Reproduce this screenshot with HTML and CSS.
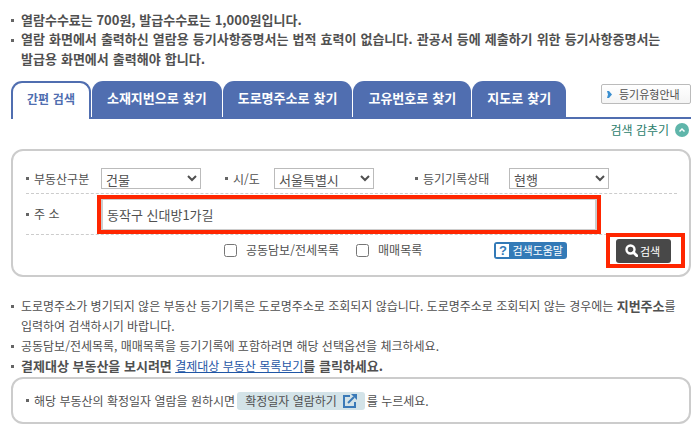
FILE: index.html
```html
<!DOCTYPE html>
<html lang="ko">
<head>
  <meta charset="UTF-8">
  <meta name="viewport" content="width=device-width, initial-scale=1.0">
  <title>간편 검색</title>
  <link rel="stylesheet" href="styles.css">
</head>
<body>

  <ul class="notice strong">
    <li class="price">열람수수료는 700원, 발급수수료는 1,000원입니다.</li>
    <li>열람 화면에서 출력하신 열람용 등기사항증명서는 법적 효력이 없습니다. 관공서 등에 제출하기 위한 등기사항증명서는 발급용 화면에서 출력해야 합니다.</li>
  </ul>

  <nav class="tabs">
    <a href="#" class="tab active">간편 검색</a>
    <a href="#" class="tab">소재지번으로 찾기</a>
    <a href="#" class="tab">도로명주소로 찾기</a>
    <a href="#" class="tab">고유번호로 찾기</a>
    <a href="#" class="tab">지도로 찾기</a>
    <button type="button" class="type-btn">
      <svg width="5" height="7" viewBox="0 0 5 7"><path d="M0 0h2l3 3.500-3 3.500H0l1-3.500z" fill="#3b8fd0"/></svg>
      등기유형안내
    </button>
  </nav>

  <a href="#" class="fold">
    검색 감추기
    <svg width="14" height="14" viewBox="0 0 14 14"><circle cx="7" cy="7" r="7" fill="#5fb5aa"/><path d="M4.500 8.500L7 6l2.500 2.500" fill="none" stroke="#fff" stroke-width="1.500"/></svg>
  </a>

  <form class="panel search">
    <div class="row filters">
      <label class="dot" for="kind">부동산구분</label>
      <select id="kind"><option>건물</option></select>
      <label class="dot" for="city">시/도</label>
      <select id="city"><option>서울특별시</option></select>
      <label class="dot" for="state">등기기록상태</label>
      <select id="state"><option>현행</option></select>
    </div>
    <div class="row address">
      <label class="dot" for="addr">주 소</label>
      <input type="text" id="addr" value="동작구 신대방1가길">
    </div>
    <div class="options">
      <label class="check"><input type="checkbox">공동담보/전세목록</label>
      <label class="check"><input type="checkbox">매매목록</label>
      <button type="button" class="help-btn"><span class="mark">?</span>검색도움말</button>
      <div class="focus-frame">
        <button type="submit" class="search-btn">
          <svg width="13" height="13" viewBox="0 0 13 13" fill="none" stroke="#fff"><circle cx="5.500" cy="5.500" r="4" stroke-width="2.400"/><path d="M8.500 8.500l3.300 3.300" stroke-width="2.800" stroke-linecap="round"/></svg>
          검색
        </button>
      </div>
    </div>
  </form>

  <ul class="notice">
    <li>도로명주소가 병기되지 않은 부동산 등기기록은 도로명주소로 조회되지 않습니다. 도로명주소로 조회되지 않는 경우에는 <strong>지번주소</strong>를 입력하여 검색하시기 바랍니다.</li>
    <li>공동담보/전세목록, 매매목록을 등기기록에 포함하려면 해당 선택옵션을 체크하세요.</li>
    <li><strong>결제대상 부동산을 보시려면</strong> <a href="#" class="link">결제대상 부동산 목록보기</a><strong>를 클릭하세요.</strong></li>
  </ul>

  <div class="panel guide">
    <span class="dot">해당 부동산의 확정일자 열람을 원하시면</span>
    <button type="button" class="date-btn">
      확정일자 열람하기
      <svg width="14" height="14" viewBox="0 0 14 14" fill="none" stroke="#3a7ab8" stroke-width="2"><path d="M7 2H1v11h11V8"/><path d="M5 9l6-6"/><path d="M8 0h6v6z" fill="#3a7ab8" stroke="none"/></svg>
    </button>
    <span>를 누르세요.</span>
  </div>

</body>
</html>
```

FILE: styles.css
```css
* {
  box-sizing: border-box;
}

body {
  margin: 0;
  padding: 10px 8px 6px 11px;
  font-family: "Noto Sans CJK KR", sans-serif;
  font-size: 12px;
  line-height: 20px;
  color: #505050;
  background: #fff;
}

a {
  text-decoration: none;
}

button,
input,
select {
  font-family: inherit;
  color: inherit;
}

button {
  cursor: pointer;
}

svg {
  flex: none;
}

.strong,
.tab {
  font-family: "DejaVu Sans Condensed", "Noto Sans CJK KR", sans-serif;
  font-size: 13px;
  font-weight: bold;
}

strong {
  font-size: 13px;
  vertical-align: top;
}

/* Notices */
.notice {
  margin: 0;
  padding: 0;
  list-style: none;
  word-break: keep-all;
}

.notice li {
  padding-left: 10px;
  background: linear-gradient(#666, #666) 0 9px / 3px 3px no-repeat;
}

.price {
  font-family: "Liberation Sans Narrow", "Noto Sans CJK KR", sans-serif;
}

.link {
  color: #1f56a5;
  text-decoration: underline;
}

/* Tabs */
.tabs {
  display: flex;
  gap: 1px;
  height: 38px;
  margin-top: 11px;
  border-bottom: 2px solid #506eb0;
}

.tab {
  padding: 0 15px;
  line-height: 36px;
  color: #fff;
  background: #506eb0;
  border-radius: 11px 11px 0 0;
  white-space: nowrap;
}

.tab.active {
  margin-bottom: -2px;
  padding: 0 14px;
  font-size: 12px;
  line-height: 34px;
  color: #506eb0;
  background: #fff;
  border: 2px solid #506eb0;
  border-bottom: none;
}

.type-btn {
  display: flex;
  align-items: center;
  gap: 7px;
  width: 90px;
  height: 20px;
  margin: 3px 0 0 auto;
  padding: 0 5px;
  font-size: 11px;
  white-space: nowrap;
  background: linear-gradient(#fff, #f4f4f4);
  border: 1px solid #bbb;
  border-radius: 2px;
}

.fold {
  display: flex;
  justify-content: flex-end;
  align-items: center;
  gap: 6px;
  height: 20px;
  margin-top: 1px;
  padding-right: 2px;
  color: #2b7d6c;
}

/* Boxes */
.panel {
  border: 2px solid #ccc;
  border-radius: 12px;
}

.dot {
  padding-left: 8px;
  background: linear-gradient(#666, #666) 0 50% / 3px 3px no-repeat;
}

.search {
  margin: 9px 0 19px;
  padding: 17px 12px 10px 13px;
}

.row {
  display: grid;
  align-items: center;
  border-bottom: 1px dashed #ccc;
}

.filters {
  grid-template-columns: 75px 124px 49px 141px 94px 1fr;
  padding-bottom: 4px;
}

.filters select {
  width: 100px;
  height: 21px;
  padding: 0;
  font-size: 13px;
  background: #fff;
  border: 1px solid #bbb;
  border-radius: 0;
}

.address {
  grid-template-columns: 75px 1fr;
  height: 41px;
}

.address input {
  height: 31px;
  margin-right: 80px;
  padding: 0 4px;
  font-size: 13px;
  border: 1px solid #ccc;
  border-width: 1px 2px;
  outline: 4px solid #ff2600;
}

.options {
  display: flex;
  align-items: center;
  gap: 17px;
  height: 30px;
  padding-left: 198px;
}

.check {
  display: flex;
  align-items: center;
  gap: 9px;
  white-space: nowrap;
}

.check input {
  width: 13px;
  height: 13px;
  margin: 0;
}

.help-btn {
  display: flex;
  align-items: center;
  gap: 3px;
  height: 17px;
  margin-left: auto;
  margin-right: 22px;
  padding: 0 4px 0 2px;
  font-size: 11px;
  white-space: nowrap;
  color: #fff;
  background: #337ab7;
  border: none;
  border-radius: 3px;
}

.mark {
  width: 13px;
  height: 13px;
  line-height: 13px;
  font-family: "Liberation Sans", sans-serif;
  font-size: 13px;
  font-weight: bold;
  color: #337ab7;
  background: #fff;
}

.focus-frame {
  padding: 2px 10px 1px 6px;
  margin-right: -8px;
  border: 4px solid #ff2600;
}

.search-btn {
  display: flex;
  align-items: center;
  gap: 2px;
  width: 55px;
  height: 24px;
  padding: 0 9px;
  font-size: 11px;
  white-space: nowrap;
  color: #fff;
  background: #484848;
  border: none;
  border-radius: 3px;
}

.guide {
  display: flex;
  align-items: center;
  gap: 2px;
  height: 47px;
  margin-top: 1px;
  padding: 0 13px;
}

.date-btn {
  display: flex;
  align-items: center;
  gap: 6px;
  height: 18px;
  padding: 0 8px;
  font-size: 12px;
  white-space: nowrap;
  background: #d3e3e8;
  border: none;
  border-radius: 3px;
}
```
